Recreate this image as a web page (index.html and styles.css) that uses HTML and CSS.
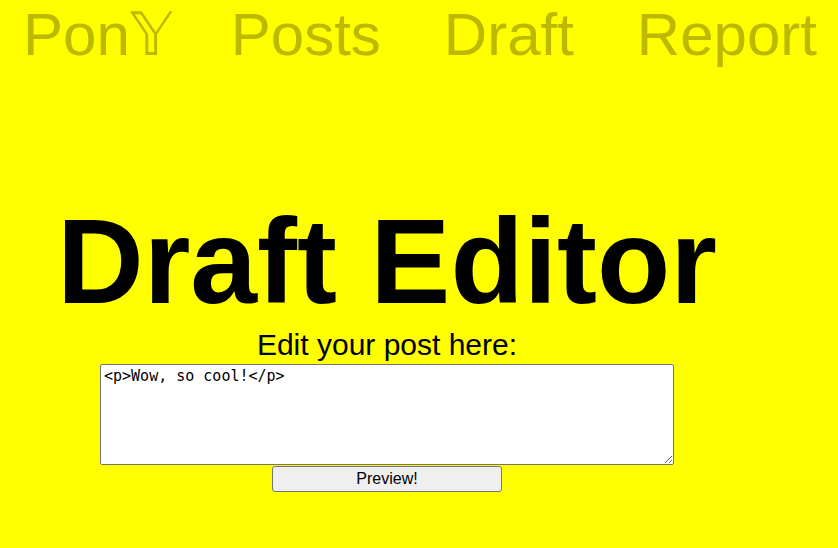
FILE: index.html
```html
<!DOCTYPE html>
<html lang="en">
<head>
<meta charset="utf-8">
<title>Draft Editor</title>
<link rel="stylesheet" href="styles.css">
</head>
<body>
<nav class="nav">
  <a class="nav-link brand" href="#">Pon𝕐</a>
  <a class="nav-link" href="#">Posts</a>
  <a class="nav-link" href="#">Draft</a>
  <a class="nav-link" href="#">Report</a>
</nav>
<main class="editor">
  <h1 class="title">Draft Editor</h1>
  <label class="label" for="post">Edit your post here:</label>
  <textarea id="post" class="post-input">&lt;p&gt;Wow, so cool!&lt;/p&gt;</textarea>
  <button class="preview-btn" type="button">Preview!</button>
</main>
</body>
</html>
```
FILE: styles.css
```css
html, body {
  margin: 0;
  padding: 0;
  background: #ffff00;
  font-family: "Liberation Sans", Arial, sans-serif;
}
body {
  width: 838px;
  height: 548px;
  overflow: hidden;
}
.nav {
  display: flex;
  gap: 63px;
  padding-left: 23px;
  height: 69px;
}
.nav-link {
  font-size: 60px;
  line-height: 69px;
  color: #bdb800;
  text-decoration: none;
  white-space: nowrap;
}
.brand {
  margin-right: -4px;
}
.editor {
  width: 774px;
  display: flex;
  flex-direction: column;
  align-items: center;
}
.title {
  margin: 132px 0 0;
  font-size: 120px;
  line-height: 120px;
  font-weight: bold;
  color: #000;
}
.label {
  margin-top: 7px;
  font-size: 30px;
  line-height: 34px;
  color: #000;
}
.post-input {
  box-sizing: border-box;
  width: 574px;
  height: 101px;
  margin-top: 2px;
  padding: 2px 3px;
  border: 1px solid #767676;
  border-radius: 2px;
  background: #fff;
  font-family: "DejaVu Sans Mono", monospace;
  font-size: 15px;
  color: #000;
  display: block;
}
.preview-btn {
  box-sizing: border-box;
  width: 230px;
  height: 26px;
  margin-top: 1px;
  border: 1px solid #767676;
  border-radius: 3px;
  background: #efefef;
  font-family: "Liberation Sans", Arial, sans-serif;
  font-size: 16px;
  color: #000;
  padding: 0;
}
```
